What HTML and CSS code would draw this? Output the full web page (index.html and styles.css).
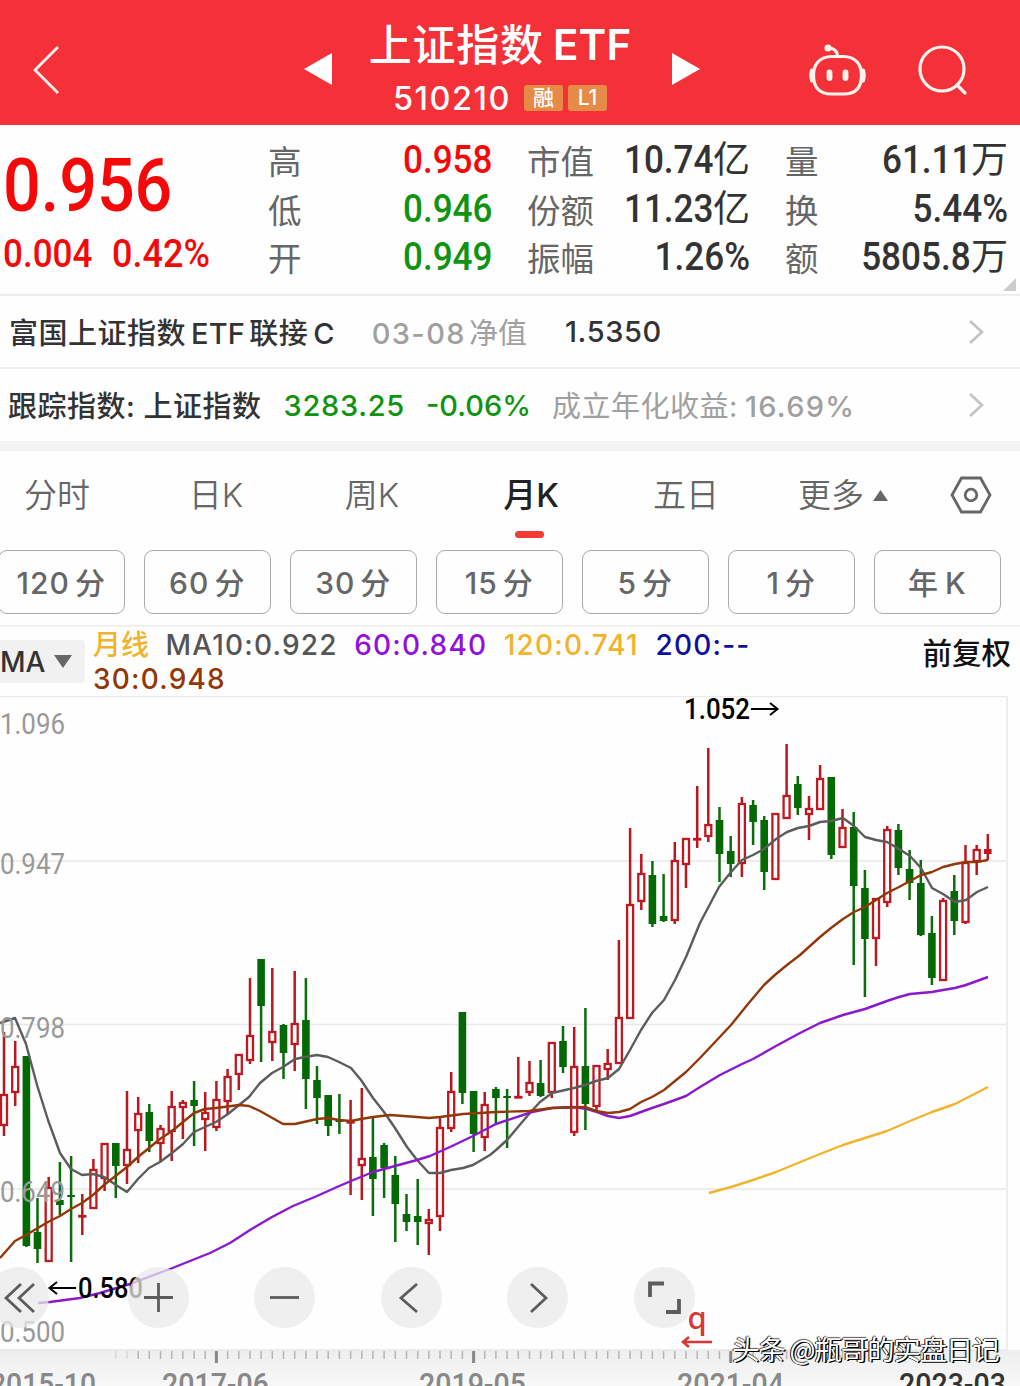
FILE: index.html
```html
<!DOCTYPE html>
<html lang="zh-CN">
<head>
<meta charset="utf-8">
<title>上证指数ETF 510210</title>
<link rel="stylesheet" href="styles.css">
</head>
<body>
<header class="topbar">
  <svg class="back" width="30" height="52" viewBox="0 0 30 52"><path d="M27 3 L4 26 L27 49"/></svg>
  <svg class="prev" width="28" height="32" viewBox="0 0 28 32"><path d="M0 16 L28 0 V32 Z"/></svg>
  <div class="heading">
    <h1 class="name">上证指数<span class="name-latin">ETF</span></h1>
    <div class="code-row"><span class="code">510210</span><span class="badge">融</span><span class="badge">L1</span></div>
  </div>
  <svg class="next" width="28" height="32" viewBox="0 0 28 32"><path d="M28 16 L0 0 V32 Z"/></svg>
  <svg class="robot" width="60" height="54" viewBox="0 0 60 54">
    <path d="M24 13.500 H35 C48 13.500 53.500 22 53.500 32 C53.500 44 48 51 36 51 H23 C11 51 5.500 44 5.500 32 C5.500 22 11 13.500 24 13.500 Z"/>
    <path d="M20 5 Q29 5 29.500 13"/><circle class="solid" cx="20" cy="5" r="3.600"/>
    <path class="ear" d="M4 27.500 Q2.500 32 4 37.500 M55 27.500 Q56.500 32 55 37.500"/>
    <path class="eye" d="M21.500 29.500 V35 M37.500 29.500 V35"/>
  </svg>
  <svg class="search" width="50" height="52" viewBox="0 0 50 52"><circle cx="24" cy="24" r="22"/><path d="M39 40 L47 48"/></svg>
</header>

<section class="quote">
  <div class="price-box">
    <div class="price">0.956</div>
    <div class="change"><span>0.004</span><span>0.42%</span></div>
  </div>
  <dl class="stats">
    <dt>高</dt><dd class="up"><span>0.958</span></dd><dt>市值</dt><dd><span>10.74</span><i>亿</i></dd><dt>量</dt><dd><span>61.11</span><i>万</i></dd>
    <dt>低</dt><dd class="down"><span>0.946</span></dd><dt>份额</dt><dd><span>11.23</span><i>亿</i></dd><dt>换</dt><dd><span>5.44%</span></dd>
    <dt>开</dt><dd class="down"><span>0.949</span></dd><dt>振幅</dt><dd><span>1.26%</span></dd><dt>额</dt><dd><span>5805.8</span><i>万</i></dd>
  </dl>
  <svg class="corner" width="13" height="13" viewBox="0 0 13 13"><path d="M13 0 V13 H0 Z"/></svg>
</section>

<section class="link-row">
  <span class="fund">富国上证指数<b>ETF</b>联接<b>C</b></span>
  <span class="nav-date">03-08<em>净值</em></span>
  <span class="nav">1.5350</span>
  <svg class="chev" width="16" height="26" viewBox="0 0 16 26"><path d="M2 2 L14 13 L2 24"/></svg>
</section>
<section class="link-row tracking">
  <span class="track">跟踪指数: 上证指数</span>
  <span class="index">3283.25</span>
  <span class="pct">-0.06%</span>
  <span class="annual">成立年化收益:<em>16.69%</em></span>
  <svg class="chev" width="16" height="26" viewBox="0 0 16 26"><path d="M2 2 L14 13 L2 24"/></svg>
</section>

<nav class="tabs">
  <span>分时</span><span>日K</span><span>周K</span><span class="active">月K</span><span>五日</span>
  <span class="more">更多<svg width="15" height="11" viewBox="0 0 15 11"><path d="M7.500 0 L15 11 H0 Z"/></svg></span>
  <svg class="gear" width="42" height="38" viewBox="0 0 42 38"><path d="M11.500 2 H30.500 L40 19 L30.500 36 H11.500 L2 19 Z"/><circle cx="21" cy="19" r="5.800"/></svg>
</nav>

<div class="periods">
  <button>120<i>分</i></button><button>60<i>分</i></button><button>30<i>分</i></button><button>15<i>分</i></button><button>5<i>分</i></button><button>1<i>分</i></button><button><i>年</i>K</button>
</div>

<section class="legend">
  <div class="ma-select">MA<svg width="18" height="13" viewBox="0 0 18 13"><path d="M0 0 H18 L9 13 Z"/></svg></div>
  <div class="ma-values">
    <div><span class="monthly">月线</span><span class="ma10">MA10:0.922</span><span class="ma60">60:0.840</span><span class="ma120">120:0.741</span><span class="ma200">200:--</span></div>
    <div><span class="ma30">30:0.948</span></div>
  </div>
  <span class="adjust">前复权</span>
</section>

<section class="chart">
  <svg class="plot" width="1020" height="690" viewBox="0 696 1020 690">
    <defs><linearGradient id="axisbg" x1="0" x2="0" y1="0" y2="1"><stop offset="0" stop-color="#eeeeee"/><stop offset="1" stop-color="#f8f8f8"/></linearGradient></defs>
    <rect x="0" y="1350" width="1020" height="36" fill="url(#axisbg)"/>
    <path class="grid" d="M0 696.500 H1007 M0 861 H1007 M0 1024.500 H1007 M0 1189 H1007 M0 1350 H1007 M1007 696 V1350"/>
    <g id="candles"></g>
    <polyline class="line10" points="0,1023 15,1018 26,1044 37,1085 48,1120 60,1153 71,1169 82,1175 93,1174 104,1177 116,1185 127,1192 138,1179 149,1168 160,1162 172,1153 183,1144 194,1132 205,1127 216,1122 228,1114 239,1105 249,1097 260,1083 272,1073 283,1067 295,1059 305,1057 317,1055 328,1057 339,1062 351,1068 361,1080 373,1098 384,1112 395,1128 407,1147 417,1160 429,1173 440,1173 451,1170 463,1168 473,1165 490,1155 496,1150 507,1140 518,1127 529,1114 540,1102 552,1093 574,1088 585,1085 596,1081 608,1078 619,1069 630,1050 641,1030 652,1013 664,1000 675,980 686,957 693,940 700,923 719,887 731,872 742,860 753,855 764,849 776,839 787,832 798,828 809,826 820,822 831,821 843,818 854,826 865,837 876,840 887,842 899,849 910,856 921,868 932,888 943,894 955,902 966,900 977,892 988,887"/>
    <polyline class="line60" points="38,1303 50,1302 80,1298 100,1293 130,1284 170,1269 210,1253 230,1243 250,1230 272,1217 293,1206 317,1196 337,1187 351,1181 373,1172 395,1166 417,1160 430,1156 450,1147 473,1136 496,1124 532,1112 552,1108 574,1107 587,1109 597,1112 608,1116 619,1118 630,1116 652,1108 664,1104 686,1096 700,1087 720,1075 742,1064 753,1059 776,1046 800,1033 820,1023 843,1015 865,1009 876,1005 887,1001 899,997 910,994 921,993 932,992 943,990 955,988 966,985 988,977"/>
    <polyline class="line30" points="0,1258 15,1241 26,1235 48,1222 60,1216 71,1209 82,1203 93,1195 104,1185 127,1167 138,1157 149,1148 160,1139 172,1131 183,1122 194,1113 205,1109 216,1108 239,1105 249,1106 260,1111 283,1124 295,1124 317,1119 328,1118 339,1120 351,1121 361,1119 373,1117 390,1115 417,1117 429,1118 440,1117 463,1114 496,1112 529,1111 552,1108 585,1107 596,1111 608,1113 619,1112 630,1109 641,1102 652,1097 664,1090 675,1081 686,1072 700,1058 716,1041 731,1025 748,1004 764,985 776,974 787,965 800,955 820,937 831,928 843,919 854,912 865,907 876,900 887,893 899,887 910,881 921,875 932,872 943,867 955,864 966,862 977,862 988,860"/>
    <polyline class="line120" points="709,1193 731,1187 753,1180 776,1172 798,1163 820,1154 843,1145 865,1138 887,1131 910,1121 932,1112 955,1104 988,1087"/>
    <g class="scale">
      <text x="0" y="734" textLength="65" lengthAdjust="spacingAndGlyphs">1.096</text>
      <text x="0" y="874" textLength="65" lengthAdjust="spacingAndGlyphs">0.947</text>
      <text x="0" y="1037.500" textLength="65" lengthAdjust="spacingAndGlyphs">0.798</text>
      <text x="0" y="1202" textLength="65" lengthAdjust="spacingAndGlyphs">0.649</text>
      <text x="0" y="1342" textLength="65" lengthAdjust="spacingAndGlyphs">0.500</text>
    </g>
    <g class="extreme">
      <text x="684" y="719" textLength="66" lengthAdjust="spacingAndGlyphs">1.052</text><path d="M751 709 H777 M770 703 L777.500 709 L770 715"/>
      <text x="78" y="1298" textLength="65" lengthAdjust="spacingAndGlyphs">0.580</text><path d="M76 1288 H50 M57 1282 L49.500 1288 L57 1294"/>
    </g>
    <g id="ticks"></g>
    <g class="dates">
      <text x="-10" y="1395" textLength="106" lengthAdjust="spacingAndGlyphs">2015-10</text>
      <text x="162" y="1395" textLength="107" lengthAdjust="spacingAndGlyphs">2017-06</text>
      <text x="419" y="1395" textLength="107" lengthAdjust="spacingAndGlyphs">2019-05</text>
      <text x="677" y="1395" textLength="107" lengthAdjust="spacingAndGlyphs">2021-04</text>
      <text class="latest" x="899" y="1395" textLength="107" lengthAdjust="spacingAndGlyphs">2023-03</text>
    </g>
  </svg>
  <div class="tools">
    <span><svg viewBox="0 0 61 61"><path d="M33 17 L18 31 L33 45 M46 17 L31 31 L46 45"/></svg></span>
    <span><svg viewBox="0 0 61 61"><path d="M16 30.500 H45 M30.500 16 V45"/></svg></span>
    <span><svg viewBox="0 0 61 61"><path d="M16 30.500 H45"/></svg></span>
    <span><svg viewBox="0 0 61 61"><path d="M36 17 L20 31 L36 45"/></svg></span>
    <span><svg viewBox="0 0 61 61"><path d="M24 17 L39 31 L24 45"/></svg></span>
    <span><svg viewBox="0 0 61 61"><path class="thick" d="M16 30 V16.500 H30 M45 32 V45 H32"/></svg></span>
  </div>
  <div class="marker">q<svg width="32" height="12" viewBox="0 0 32 12"><path d="M31 6 H2 M8 1 L2 6 L8 11"/></svg></div>
  <div class="credit">头条 @瓶哥的实盘日记</div>
</section>
<script src="chart.js"></script>
</body>
</html>
```
FILE: styles.css
```css
* { box-sizing: border-box; }
body {
  margin: 0; width: 1020px; height: 1386px; overflow: hidden; background: #fefefe;
  font-family: Inter, "Noto Sans CJK SC", sans-serif; color: #333;
}
i, em { font-style: normal; }
svg { display: block; }

.topbar {
  height: 125px; background: #f43138; color: #fff; display: grid; align-items: start;
  grid-template-columns: 304px 66px 260px 178px 110px 1fr;
  grid-template-rows: 125px; position: relative;
}
.topbar svg { fill: none; stroke: #fff3ee; stroke-width: 3.2; stroke-linecap: round; margin-top: 43px; }
.topbar .back { margin-left: 31px; stroke-width: 2.8; stroke-linecap: butt; margin-top: 44px; }
.topbar .prev, .topbar .next { fill: #fff; stroke: none; margin-top: 53px; }
.topbar .next { margin-left: 42px; }
.topbar .robot .solid { fill: #fff3ee; stroke: none; }
.topbar .robot .eye { stroke-width: 5.8; }
.topbar .robot .ear { stroke-width: 4; }
.topbar .search { margin-top: 45px; }
.heading { display: flex; flex-direction: column; align-items: center; }
.name { margin: 17px 0 0; font: 500 43px/56px Inter, "Noto Sans CJK SC", sans-serif; letter-spacing: .8px; white-space: nowrap; display: flex; }
.name-latin { margin-left: 9px; font-weight: 600; font-size: 42px; letter-spacing: .2px; }
.code-row { display: flex; align-items: center; height: 50px; }
.code { font-size: 32.5px; font-weight: 500; letter-spacing: 1.5px; margin-right: 13px; }
.badge { width: 39px; height: 26px; border-radius: 3px; background: #e58b47; font-size: 21px; line-height: 26px; text-align: center; margin-right: 5px; font-weight: 500; }
.badge:last-child { margin-right: 0; }

.quote { height: 171px; border-bottom: 2px solid #eee; display: flex; position: relative; }
.price-box { width: 268px; padding: 20px 0 0 3px; color: #f40808; font-family: Roboto, sans-serif; font-weight: 500; }
.price { font-size: 75px; line-height: 80px; transform: scaleX(.885); transform-origin: left; }
.change { display: flex; gap: 11px; font-size: 38.5px; line-height: 57px; }
.change span { transform: scaleX(.91); transform-origin: left; }
.change span + span { transform: scaleX(.935); }
.stats {
  margin: 0; padding-top: 11px; display: grid; grid-template-columns: 67px 157px 102px 156px 68px 190px;
  grid-auto-rows: 48.600px; line-height: 52px;
}
.stats dt { font-size: 33.5px; color: #666; white-space: nowrap; }
.stats dt:nth-of-type(3n+2) { padding-left: 35px; }
.stats dt:nth-of-type(3n) { padding-left: 35px; }
.stats dd { margin: 0; font: 500 39px/49px Roboto, "Noto Sans CJK SC", sans-serif; text-align: right; white-space: nowrap; }
.stats dd span { display: inline-block; transform: scaleX(.9); transform-origin: right; }
.stats dd i { font-size: 37px; font-weight: 400; }
.stats .up { color: #f40808; }
.stats .down { color: #109310; }
.corner { position: absolute; right: 4px; bottom: 3px; fill: #ccc; }

.link-row { height: 73px; border-bottom: 2px solid #eee; display: flex; align-items: center; padding: 0 36px 0 9px; font-size: 29px; font-weight: 500; white-space: nowrap; letter-spacing: .5px; }
.link-row b { font-weight: 500; margin: 0 4px 0 5px; letter-spacing: .2px; }
.link-row .chev { margin-left: auto; fill: none; stroke: #c4c4c4; stroke-width: 2.800; }
.fund, .nav-date, .track, .annual { position: relative; top: -1px; }
.link-row .fund b:last-child { margin-right: 0; }
.nav-date { color: #a0a0a0; font-weight: 450; margin-left: 37px; letter-spacing: 1.400px; }
.nav-date em { margin-left: 3px; letter-spacing: 0; font-weight: 400; }
.nav { margin-left: 38px; letter-spacing: .6px; }
.tracking { height: 82px; border-bottom: 10px solid #f3f3f3; padding-left: 8px; }
.index, .pct { color: #109310; margin-left: 22px; letter-spacing: .7px; }
.pct { letter-spacing: 0; margin-left: 21px; }
.annual { color: #a0a0a0; font-weight: 400; margin-left: 21px; }
.annual em { margin-left: 7px; letter-spacing: 1.300px; font-weight: 450; }

.tabs { height: 99px; display: grid; grid-template-columns: 114px 204px 108px 210px 100px 214px 42px; font-size: 33px; line-height: 89px; text-align: center; color: #666; font-weight: 350; }
.tabs .active { color: #222; font-weight: 500; position: relative; }
.tabs .active::after { content: ""; position: absolute; left: 89px; top: 80px; width: 29px; height: 7px; border-radius: 4px; background: #f33a36; }
.more { display: flex; justify-content: center; align-items: center; height: 89px; gap: 9px; }
.more svg { fill: #666; }
.gear { margin-top: 25px; fill: none; stroke: #666; stroke-width: 2.800; }

.periods { height: 77px; border-bottom: 2px solid #f0f0f0; display: flex; gap: 19.500px; padding-left: 0; margin-left: -2px; }
.periods button { flex: none; width: 126.500px; height: 64px; border: 1.500px solid #aaa; border-radius: 9px; background: #fefefe; color: #666; font: 500 30px/58px Inter, "Noto Sans CJK SC", sans-serif; letter-spacing: 1px; padding: 2px 0 0; }
.periods i { margin-left: 5px; }
.periods button:last-child i { margin: 0 6px 0 0; }

.legend { height: 69px; display: flex; position: relative; }
.ma-select { width: 85px; height: 43px; margin-top: 13px; background: #f1f1f1; border-radius: 0 4px 4px 0; display: flex; align-items: center; gap: 9px; font-size: 28px; font-weight: 500; }
.ma-select svg { fill: #666; }
.ma-values { padding: 1px 0 0 8px; font-size: 28px; font-weight: 500; line-height: 34px; white-space: nowrap; letter-spacing: 1.200px; }
.ma-values div { display: flex; gap: 16.500px; }
.monthly, .ma120 { color: #f2b32c; }
.monthly { letter-spacing: 0; }
.ma10 { color: #555; }
.ma60 { color: #9210dc; }
.ma200 { color: #1010a0; }
.ma30 { color: #923808; }
.adjust { position: absolute; right: 9px; top: 6px; font-size: 29.500px; line-height: 40px; font-weight: 500; color: #111; }

.chart { position: relative; height: 690px; }
.plot text { font-family: Roboto, sans-serif; }
.grid { fill: none; stroke: #e8e8e8; stroke-width: 1.500; }
.plot polyline { fill: none; stroke-width: 2.400; stroke-linejoin: round; }
.line10 { stroke: #5c5c5c; }
.line30 { stroke: #923808; }
.line60 { stroke: #8c18cc; }
.line120 { stroke: #f0b52c; }
.wick-up { stroke: #b81820; stroke-width: 2.500; }
.wick-down { stroke: #0a6c0a; stroke-width: 2.500; }
.body-up { fill: #fefefe; stroke: #c01820; stroke-width: 2.300; }
.body-last { fill: #c01820; }
.body-down { fill: #046804; }
.scale { font-size: 29px; fill: #999; }
.extreme { font-size: 30px; font-weight: 500; fill: #000; }
.extreme path { fill: none; stroke: #000; stroke-width: 2; }
.dates { font-size: 32px; fill: #888; font-weight: 500; }
.latest { fill: #333; }
.tick { stroke: #b4b4b4; stroke-width: 1.500; }
.tick-major { stroke: #888; stroke-width: 3; }
.tools { position: absolute; left: -12.500px; top: 571px; display: flex; }
.tools span { width: 61px; height: 61px; border-radius: 50%; background: rgba(234, 234, 234, .75); margin-right: 65.500px; }
.tools span:first-child { margin-right: 79px; }
.tools svg { fill: none; stroke: #5c5c5c; stroke-width: 2.800; }
.tools .thick { stroke-width: 3.800; }
.marker { position: absolute; left: 681px; top: 604px; width: 32px; color: #dc3535; font: 500 31px/34px "Noto Sans", sans-serif; text-align: center; }
.marker svg { fill: none; stroke: #dc3535; stroke-width: 2.600; margin-top: 2px; }
.credit { position: absolute; left: 732px; top: 632px; font: 400 27.500px/40px "Noto Sans CJK SC", sans-serif; letter-spacing: -1.200px; color: #fff; white-space: nowrap; text-shadow: 1.500px 1px 0 #000, -1px 0 0 #111, 0 -1px 1px #555; }
```
FILE: chart.js
```js
// Each row: direction (1 = rise, 0 = fall, 2 = current month), high, body top, body bottom, low
const rows = [
[1,1032,1094,1126,1136],[1,1041,1066,1093,1106],[0,1056,1056,1246,1247],[0,1198,1232,1249,1263],[1,1177,1187,1262,1262],
[0,1162,1200,1205,1215],[0,1156,1195,1197,1262],[1,1194,1215,1217,1235],[1,1159,1169,1209,1209],[1,1143,1143,1179,1191],
[0,1143,1143,1166,1198],[1,1091,1149,1166,1184],[1,1097,1113,1131,1163],[0,1104,1112,1141,1152],[1,1125,1128,1144,1162],
[1,1091,1106,1132,1161],[1,1100,1102,1108,1139],[0,1081,1100,1106,1146],[1,1092,1112,1120,1151],[1,1081,1099,1128,1131],
[1,1069,1076,1102,1115],[1,1054,1054,1075,1090],[1,978,1035,1061,1064],[0,959,959,1006,1062],[1,968,1031,1043,1061],
[0,1024,1025,1053,1079],[1,971,1023,1045,1071],[0,978,1020,1079,1109],[0,1066,1080,1098,1124],[0,1095,1095,1126,1136],
[0,1094,1120,1122,1134],[1,1100,1121,1123,1195],[1,1088,1158,1166,1200],[0,1116,1157,1179,1216],[0,1143,1145,1168,1198],
[0,1156,1175,1204,1242],[0,1194,1214,1222,1231],[0,1179,1216,1222,1245],[1,1209,1219,1224,1255],[1,1117,1127,1217,1231],
[1,1072,1091,1129,1132],[0,1012,1012,1093,1104],[0,1091,1091,1134,1152],[1,1092,1104,1138,1151],[0,1087,1089,1098,1125],
[0,1089,1096,1098,1148],[1,1057,1096,1098,1098],[1,1061,1082,1093,1096],[0,1060,1083,1096,1097],[1,1042,1042,1093,1098],
[0,1026,1041,1067,1073],[1,1027,1066,1133,1136],[0,1008,1066,1104,1130],[1,1065,1065,1107,1110],[1,1049,1063,1070,1080],
[1,940,1017,1064,1064],[1,828,904,1019,1019],[1,854,873,902,910],[0,861,875,924,927],[0,874,916,921,922],
[1,842,860,921,924],[1,838,838,865,888],[1,786,838,840,848],[1,748,824,837,842],[0,807,820,854,882],
[0,836,851,864,877],[1,797,803,864,877],[0,800,805,822,845],[0,816,820,872,890],[1,813,813,880,880],
[1,744,795,819,819],[0,776,784,808,815],[1,796,808,815,840],[1,765,778,810,810],[0,777,777,855,859],
[1,809,827,848,848],[0,812,827,886,965],[0,870,888,939,997],[1,898,898,939,966],[1,826,829,903,907],
[0,824,830,868,875],[0,850,869,883,900],[0,860,883,935,936],[0,916,933,978,985],[1,898,900,981,981],
[0,875,891,921,935],[1,845,862,923,924],[1,845,849,862,875],[2,834,849,854,860]
];
const step = 11.18, first = 4;
let out = "", ticks = "";
rows.forEach(([dir, hi, top, bottom, lo], i) => {
  const x = +(first + i * step).toFixed(1);
  const kind = dir ? "up" : "down";
  if (dir === 1) {
    out += `<path class="wick-up" d="M${x} ${hi}V${top}M${x} ${bottom}V${lo}"/>`;
    const h = Math.max(bottom - top - 2, 0.5);
    out += `<rect class="body-up" x="${x - 3}" y="${top + 1}" width="6" height="${h}"/>`;
  } else {
    out += `<path class="wick-${kind}" d="M${x} ${hi}V${lo}"/>`;
    out += `<rect class="${dir === 2 ? "body-last" : "body-down"}" x="${x - 3.8}" y="${top}" width="7.6" height="${bottom - top}"/>`;
  }
  if (i >= 10) {
    const major = i === 19 || i === 42 || i === 65 || i === 88;
    ticks += `<path class="${major ? "tick-major" : "tick"}" opacity="${i < 12 ? 0.4 : 1}" d="M${x} 1351V${major ? 1363 : 1359}"/>`;
  }
});
document.getElementById("candles").innerHTML = out;
document.getElementById("ticks").innerHTML = ticks;
```
